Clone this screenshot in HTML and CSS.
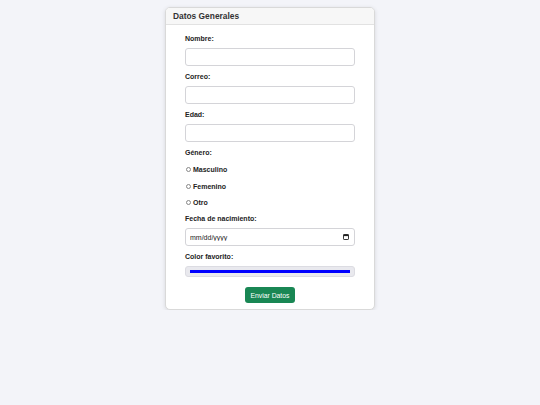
FILE: index.html
```html
<!DOCTYPE html>
<html lang="es">
<head>
<meta charset="utf-8">
<title>Datos Generales</title>
<link rel="stylesheet" href="styles.css">
</head>
<body>
<div class="card">
  <div class="card-header">Datos Generales</div>
  <form class="card-body">
    <label class="field-label" for="nombre">Nombre:</label>
    <input class="text-input" type="text" id="nombre">
    <label class="field-label" for="correo">Correo:</label>
    <input class="text-input" type="email" id="correo">
    <label class="field-label" for="edad">Edad:</label>
    <input class="text-input" type="number" id="edad">
    <span class="field-label genero">Género:</span>
    <label class="radio-row"><input type="radio" name="genero" class="radio"> Masculino</label>
    <label class="radio-row"><input type="radio" name="genero" class="radio"> Femenino</label>
    <label class="radio-row last"><input type="radio" name="genero" class="radio"> Otro</label>
    <label class="field-label" for="fecha">Fecha de nacimiento:</label>
    <div class="date-wrap">
      <input class="text-input date-input" type="text" id="fecha" placeholder="mm/dd/yyyy">
      <svg class="cal-icon" width="6" height="6" viewBox="0 0 6 6" aria-hidden="true">
        <rect x="0.5" y="0.5" width="5" height="5" rx="0.6" fill="none" stroke="#222" stroke-width="0.9"/>
        <rect x="0.5" y="0.5" width="5" height="1.6" fill="#222"/>
      </svg>
    </div>
    <label class="field-label" for="color">Color favorito:</label>
    <input class="color-input" type="color" id="color" value="#0000ff">
    <div class="actions"><button type="submit" class="btn">Enviar Datos</button></div>
  </form>
</div>
</body>
</html>
```
FILE: styles.css
```css
* { box-sizing: border-box; }
body {
  margin: 0;
  background: #f3f4f9;
  font-family: "Liberation Sans", Arial, sans-serif;
  color: #222;
}
.card {
  width: 210px;
  margin: 7px auto 0;
  background: #fff;
  border: 1px solid #d9d9d9;
  border-radius: 5px;
  box-shadow: 0 1px 4px rgba(0,0,0,0.12);
  overflow: hidden;
}
.card-header {
  height: 17px;
  padding: 0 7px;
  background: #f7f7f7;
  border-bottom: 1px solid #e2e2e2;
  font-size: 8.4px;
  font-weight: bold;
  line-height: 16px;
  color: #333;
}
.card-body {
  display: flex;
  flex-direction: column;
  padding: 9px 19px 6px;
}
.field-label {
  display: block;
  font-size: 7px;
  font-weight: bold;
  line-height: 9px;
  margin-bottom: 5px;
}
.genero { margin-bottom: 8px; }
.text-input {
  display: block;
  width: 170px;
  height: 18px;
  margin: 0 0 6px;
  padding: 0 4px;
  border: 1px solid #d4d4d8;
  border-radius: 3px;
  background: #fff;
  font-family: inherit;
  font-size: 7px;
  color: #222;
}
.date-wrap {
  position: relative;
  width: 170px;
}
.date-input::placeholder { color: #222; opacity: 1; }
.cal-icon {
  position: absolute;
  right: 6px;
  top: 6px;
}
.radio-row {
  display: flex;
  align-items: center;
  gap: 2px;
  font-size: 7px;
  font-weight: bold;
  line-height: 9px;
  margin-bottom: 7.5px;
}
.radio-row.last { margin-bottom: 7px; }
.radio {
  appearance: none;
  -webkit-appearance: none;
  width: 5px;
  height: 5px;
  margin: 0 0 0 1px;
  border: 0.7px solid #888;
  border-radius: 50%;
  background: #fff;
}
.color-input {
  -webkit-appearance: none;
  appearance: none;
  display: block;
  width: 170px;
  height: 11px;
  margin: 0;
  padding: 3px 4px;
  border: 1px solid #dcdce2;
  border-radius: 3px;
  background: #e9e9ee;
}
.color-input::-webkit-color-swatch-wrapper { padding: 0; }
.color-input::-webkit-color-swatch { border: none; border-radius: 0; }
.actions {
  display: flex;
  justify-content: center;
  margin-top: 10px;
}
.btn {
  height: 16px;
  width: 50px;
  padding: 0;
  border: none;
  border-radius: 3px;
  background: #198754;
  color: #fff;
  font-family: inherit;
  font-size: 6.8px;
}
```
